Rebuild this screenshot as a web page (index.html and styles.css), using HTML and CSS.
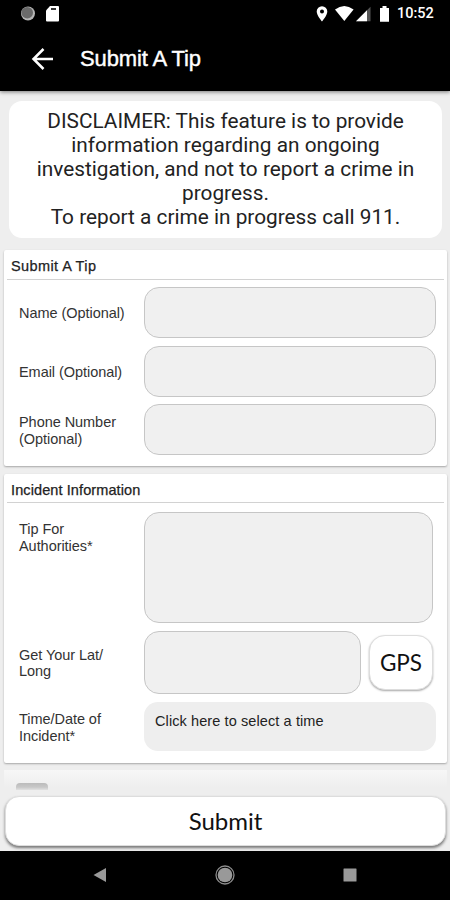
FILE: index.html
```
<!DOCTYPE html>
<html lang="en">
<head>
	<meta charset="utf-8">
	<meta name="viewport" content="width=device-width, initial-scale=1.0">
	<title>Submit A Tip</title>
	<link rel="stylesheet" href="styles.css">
</head>
<body>
<div class="screen">
	<div class="header">
		<div class="statusBar">
			<svg class="statusLeft" width="42" height="18" viewBox="0 0 42 18">
				<circle cx="8" cy="8.500" r="7" fill="#b5b5b5"/>
				<circle cx="7.200" cy="7.700" r="5.800" fill="#6a6a6a"/>
				<path d="M26 5.500l4-4.500h8q1 0 1 1v13.500q0 1-1 1h-11q-1 0-1-1z" fill="#fff"/>
				<path d="M31 3h5v2h-5z" fill="#333"/>
			</svg>
			<svg class="statusRight" width="76" height="18" viewBox="0 0 76 18">
				<path fill-rule="evenodd" d="M7 1.200a5.300 5.300 0 0 0-5.300 5.300c0 3.900 5.300 10 5.300 10s5.300-6.100 5.300-10A5.300 5.300 0 0 0 7 1.200zm0 3.300a2 2 0 1 1 0 4 2 2 0 0 1 0-4z" fill="#fff"/>
				<path d="M20 4.500q9.300-7.200 18.600 0L29.300 16z" fill="#fff"/>
				<path d="M41 16.300L55.500 1.800v14.500z" fill="#555"/>
				<path d="M41 16.300L52 5.300v11z" fill="#fff"/>
				<path d="M65 3h2.500V1h4v2H74v13.800h-9z" fill="#fff"/>
			</svg>
			<span class="clock">10:52</span>
		</div>
		<div class="titleBar">
			<svg class="back" width="24" height="24" viewBox="0 0 24 24" fill="none" stroke="#fff" stroke-width="2.500">
				<path d="M23 12H3M13.500 2L3.500 12l10 10"/>
			</svg>
			<h1>Submit A Tip</h1>
		</div>
	</div>

	<div class="content">
		<div class="disclaimer">
			<p>DISCLAIMER: This feature is to provide<br>information regarding an ongoing<br>investigation, and not to report a crime in<br>progress.<br>To report a crime in progress call 911.</p>
		</div>

		<div class="card personal">
			<h2 class="wide">Submit A Tip</h2>
			<div class="row">
				<label for="name">Name (Optional)</label>
				<input id="name" type="text">
			</div>
			<div class="row">
				<label for="email">Email (Optional)</label>
				<input id="email" type="text">
			</div>
			<div class="row">
				<label for="phone">Phone Number<br>(Optional)</label>
				<input id="phone" type="text">
			</div>
		</div>

		<div class="card incident">
			<h2>Incident Information</h2>
			<div class="row tipRow">
				<label for="tip">Tip For<br>Authorities*</label>
				<textarea id="tip"></textarea>
			</div>
			<div class="row gpsRow">
				<label for="latlong">Get Your Lat/<br>Long</label>
				<input id="latlong" type="text">
				<button class="gps">GPS</button>
			</div>
			<div class="row timeRow">
				<label>Time/Date of<br>Incident*</label>
				<div class="time">Click here to select a time</div>
			</div>
		</div>

		<!-- next card, mostly hidden by the submit button -->
		<div class="nextCard"><div class="stub"></div></div>
		<button class="submit">Submit</button>
	</div>

	<div class="navBar">
		<svg width="14" height="16" viewBox="0 0 14 16"><path d="M0.500 8L13 1v14z" fill="#999"/></svg>
		<svg width="20" height="20" viewBox="0 0 20 20">
			<circle cx="10" cy="10" r="9" fill="none" stroke="#8c8c8c" stroke-width="1.300"/>
			<circle cx="10" cy="10" r="7.300" fill="#999"/>
		</svg>
		<svg width="14" height="14" viewBox="0 0 14 14"><rect x="0.500" y="0.500" width="13" height="13" rx="0.500" fill="#999"/></svg>
	</div>
</div>
</body>
</html>
```
FILE: styles.css
```
* {
	box-sizing: border-box;
}
body, h1, h2, p {
	margin: 0;
	font-weight: normal;
}
body {
	font-family: "Liberation Sans", Arial, sans-serif;
	color: #222;
}
.screen {
	display: flex;
	flex-direction: column;
	width: 450px;
	height: 900px;
	overflow: hidden;
	background: #eee;
}

/* header */
.header {
	height: 91px;
	background: #000;
	color: #fff;
	box-shadow: 0 1px 4px rgba(0, 0, 0, 0.5);
}
.statusBar {
	display: flex;
	align-items: center;
	height: 27px;
	padding: 0 16px 0 20px;
}
.statusRight {
	margin-left: auto;
}
.clock {
	width: 37px;
	margin-left: 6px;
	font: 500 14.5px Roboto, sans-serif;
	white-space: nowrap;
}
.titleBar {
	display: flex;
	align-items: center;
	height: 64px;
	padding-left: 30px;
}
.titleBar h1 {
	margin-left: 26px;
	font-size: 22px;
	letter-spacing: -0.12px;
	-webkit-text-stroke: 0.4px #fff;
}

/* form */
.content {
	display: flex;
	flex-direction: column;
	height: 760px;
	padding: 10px 3px 0 4px;
}
.disclaimer {
	height: 137px;
	margin: 0 5px 12px 5px;
	padding: 8px 0;
	border-radius: 13px;
	background: #fff;
	text-align: center;
	font: 20.8px/24.1px Roboto, sans-serif;
}
.card {
	background: #fff;
	border-radius: 2px;
	box-shadow: 0 1px 2px rgba(0, 0, 0, 0.3);
}
.personal {
	height: 216px;
	margin-bottom: 8px;
}
.incident {
	height: 289px;
	margin-bottom: 7px;
}
.card h2 {
	height: 29px;
	margin: 0 3px 8px;
	padding-left: 4px;
	border-bottom: 1px solid #d2d2d2;
	font-size: 14.5px;
	line-height: 32px;
	letter-spacing: 0.1px;
	-webkit-text-stroke: 0.25px #222;
}
.card h2.wide {
	height: 30px;
	margin-bottom: 7px;
	letter-spacing: 0.4px;
}
.row {
	display: flex;
	align-items: center;
	height: 51px;
	margin: 0 11px 7.5px 15px;
}
.row label {
	width: 125px;
	flex: none;
	padding-top: 2px;
	font-size: 14.5px;
	line-height: 16.5px;
	letter-spacing: -0.05px;
	color: #333;
}
input, textarea {
	display: block;
	flex: 1;
	min-width: 0;
	height: 100%;
	padding: 8px 12px;
	border: 1px solid #c6c6c6;
	border-radius: 15px;
	background: #f0f0f0;
	resize: none;
}
.incident h2 {
	margin-bottom: 9px;
}
.tipRow {
	align-items: flex-start;
	height: 111px;
	margin-right: 14px;
}
.tipRow label {
	padding-top: 9px;
}
.gpsRow {
	height: 63px;
	margin-right: 14px;
	margin-bottom: 8.5px;
}
.timeRow {
	height: 49px;
}
.gps {
	width: 64px;
	height: 55px;
	margin-left: 8px;
	padding: 0;
	border: 1px solid #ddd;
	border-radius: 16px;
	background: #fff;
	box-shadow: 0 1px 2px rgba(0, 0, 0, 0.35);
	font: 22.5px Lato, sans-serif;
	color: #111;
}
.time {
	flex: 1;
	height: 100%;
	padding: 9px 11px;
	border-radius: 14px;
	background: #eee;
	font-size: 14.5px;
	line-height: 20px;
	letter-spacing: 0.1px;
}
.nextCard {
	height: 18px;
	padding: 13px 0 0 12px;
	background: linear-gradient(#f7f7f7, #eee);
}
.stub {
	width: 32px;
	height: 7px;
	border-radius: 4px 4px 0 0;
	background: linear-gradient(#bbb, #c8c8c8 60%, #e2e2e2);
}
.submit {
	height: 50px;
	margin: 8px 1px 0;
	padding: 0 0 2px;
	border: 1px solid #ddd;
	border-radius: 14px;
	background: #fff;
	box-shadow: 0 2px 3px rgba(0, 0, 0, 0.5);
	font: 24px Lato, sans-serif;
	color: #111;
}

/* android navigation */
.navBar {
	display: flex;
	align-items: center;
	justify-content: space-between;
	height: 49px;
	padding: 0 93px 2px;
	background: #000;
}
```
